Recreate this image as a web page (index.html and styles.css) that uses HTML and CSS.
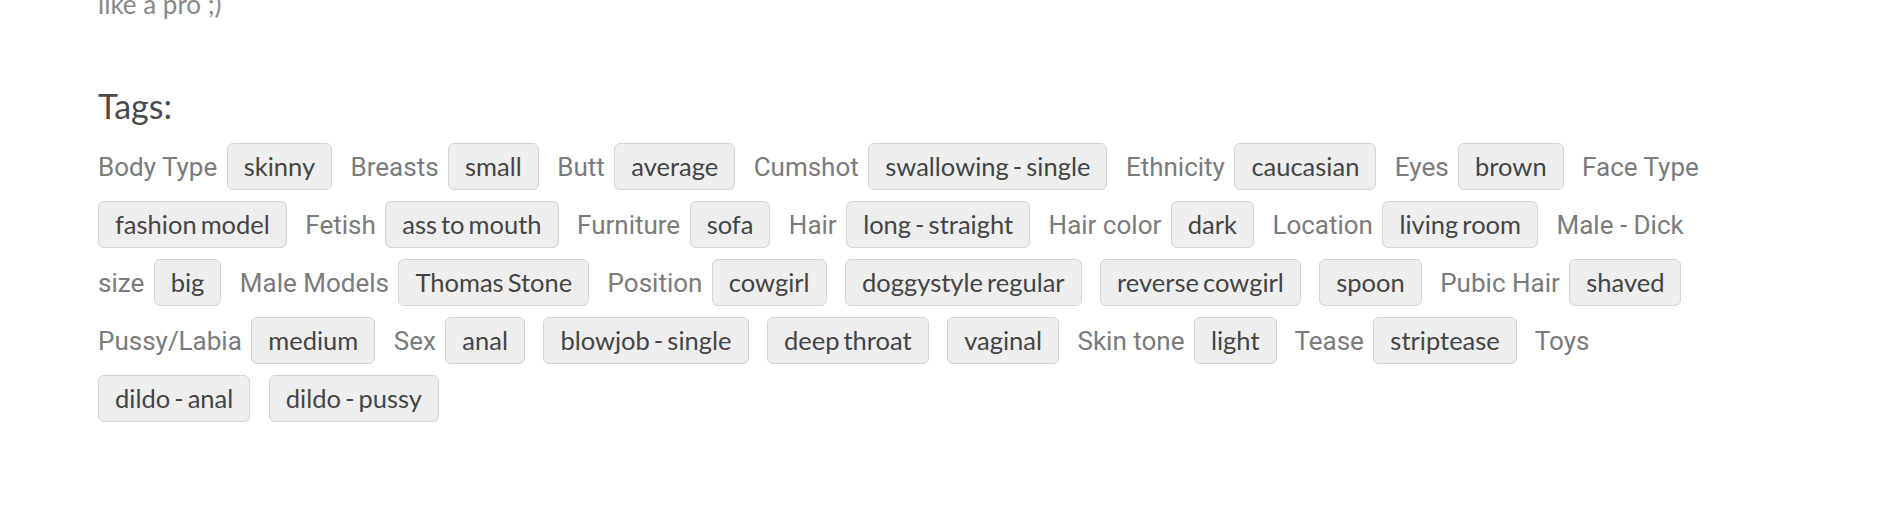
FILE: index.html
```html
<!DOCTYPE html>
<html lang="en">
<head>
<meta charset="utf-8">
<title>Tags</title>
<link rel="stylesheet" href="styles.css">
</head>
<body>
<main class="page">
  <p class="desc">like a pro ;)</p>
  <h3 class="tags-title">Tags:</h3>
  <div class="tag-list">
    <span class="tag-label">Body Type</span> <a class="tag" href="#">skinny</a>
    <span class="tag-label">Breasts</span> <a class="tag" href="#">small</a>
    <span class="tag-label">Butt</span> <a class="tag" href="#">average</a>
    <span class="tag-label">Cumshot</span> <a class="tag" href="#">swallowing - single</a>
    <span class="tag-label">Ethnicity</span> <a class="tag" href="#">caucasian</a>
    <span class="tag-label">Eyes</span> <a class="tag" href="#">brown</a>
    <span class="tag-label">Face Type</span> <a class="tag" href="#">fashion model</a>
    <span class="tag-label">Fetish</span> <a class="tag" href="#">ass to mouth</a>
    <span class="tag-label">Furniture</span> <a class="tag" href="#">sofa</a>
    <span class="tag-label">Hair</span> <a class="tag" href="#">long - straight</a>
    <span class="tag-label">Hair color</span> <a class="tag" href="#">dark</a>
    <span class="tag-label">Location</span> <a class="tag" href="#">living room</a>
    <span class="tag-label">Male - Dick size</span> <a class="tag" href="#">big</a>
    <span class="tag-label">Male Models</span> <a class="tag" href="#">Thomas Stone</a>
    <span class="tag-label">Position</span> <a class="tag" href="#">cowgirl</a> <a class="tag" href="#">doggystyle regular</a> <a class="tag" href="#">reverse cowgirl</a> <a class="tag" href="#">spoon</a>
    <span class="tag-label">Pubic Hair</span> <a class="tag" href="#">shaved</a>
    <span class="tag-label">Pussy/Labia</span> <a class="tag" href="#">medium</a>
    <span class="tag-label">Sex</span> <a class="tag" href="#">anal</a> <a class="tag" href="#">blowjob - single</a> <a class="tag" href="#">deep throat</a> <a class="tag" href="#">vaginal</a>
    <span class="tag-label">Skin tone</span> <a class="tag" href="#">light</a>
    <span class="tag-label">Tease</span> <a class="tag" href="#">striptease</a>
    <span class="tag-label">Toys</span> <a class="tag" href="#">dildo - anal</a> <a class="tag" href="#">dildo - pussy</a>
  </div>
</main>
</body>
</html>
```

FILE: styles.css
```css
html, body {
  margin: 0;
  padding: 0;
  background: #ffffff;
}

.page {
  width: 1614px;
  padding-left: 98px;
}

.desc {
  margin: -15px 0 0;
  font-family: Lato, "Open Sans", sans-serif;
  font-size: 26px;
  line-height: 39px;
  color: #888888;
}

.tags-title {
  margin: 62px 0 11px;
  font-family: Lato, "Open Sans", sans-serif;
  font-weight: 400;
  font-size: 34px;
  line-height: 1.2;
  color: #4a4a4a;
}

.tag-list {
  font-family: Roboto, "Liberation Sans", sans-serif;
  font-size: 26px;
  line-height: 58px;
  color: #7b7b7b;
}

.tag-label {
  margin-right: 3px;
}

.tag {
  display: inline-block;
  margin-right: 12px;
  padding: 3px 16px;
  border: 1px solid #d4d4d4;
  border-radius: 6px;
  background: #eeeeee;
  font-family: Lato, "Open Sans", sans-serif;
  font-size: 25.5px;
  line-height: 39px;
  word-spacing: -2.5px;
  color: #444444;
  text-decoration: none;
}
```
